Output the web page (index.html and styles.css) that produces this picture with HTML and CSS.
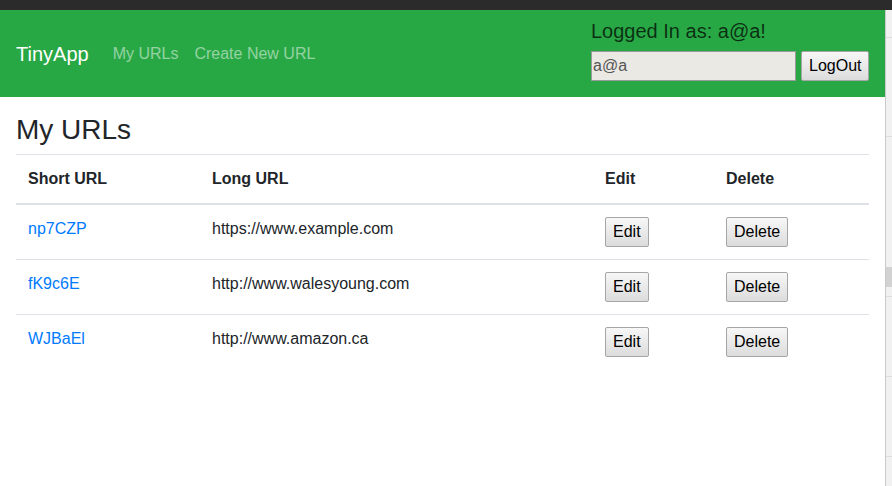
FILE: index.html
```html
<!DOCTYPE html>
<html>
<head>
<meta charset="utf-8">
<title>TinyApp</title>
<link rel="stylesheet" href="styles.css">
</head>
<body>
<div class="topbar"></div>
<div class="frame">
  <div class="page">
    <nav class="navbar">
      <div class="nav-left">
        <a class="brand" href="#">TinyApp</a>
        <a class="nav-link" href="#">My URLs</a>
        <a class="nav-link" href="#">Create New URL</a>
      </div>
      <form class="login">
        <div class="login-text">Logged In as: a@a!</div>
        <div class="login-row">
          <input class="login-input" type="text" value="a@a">
          <button class="btn" type="button">LogOut</button>
        </div>
      </form>
    </nav>
    <main class="container">
      <h3 class="title">My URLs</h3>
      <table class="table">
        <colgroup>
          <col class="c1"><col class="c2"><col class="c3"><col class="c4">
        </colgroup>
        <thead>
          <tr><th>Short URL</th><th>Long URL</th><th>Edit</th><th>Delete</th></tr>
        </thead>
        <tbody>
          <tr>
            <td><a class="link" href="#">np7CZP</a></td>
            <td>https://www.example.com</td>
            <td><button class="btn" type="button">Edit</button></td>
            <td><button class="btn" type="button">Delete</button></td>
          </tr>
          <tr>
            <td><a class="link" href="#">fK9c6E</a></td>
            <td>http://www.walesyoung.com</td>
            <td><button class="btn" type="button">Edit</button></td>
            <td><button class="btn" type="button">Delete</button></td>
          </tr>
          <tr>
            <td><a class="link" href="#">WJBaEl</a></td>
            <td>http://www.amazon.ca</td>
            <td><button class="btn" type="button">Edit</button></td>
            <td><button class="btn" type="button">Delete</button></td>
          </tr>
        </tbody>
      </table>
    </main>
  </div>
  <aside class="strip">
    <div class="seg s1"></div>
    <div class="seg s2"></div>
    <div class="seg s3"></div>
    <div class="seg thumb"></div>
    <div class="seg s4"></div>
    <div class="seg s5"></div>
    <div class="seg s6"></div>
    <div class="seg s7"></div>
  </aside>
</div>
</body>
</html>
```
FILE: styles.css
```css
* { box-sizing: border-box; }
html, body { margin: 0; padding: 0; height: 100%; overflow: hidden; }
body {
  font-family: "Liberation Sans", Arial, sans-serif;
  font-size: 16px;
  line-height: 1.5;
  color: #212529;
  background: #fff;
}
.topbar { height: 10px; background: #2b2b2b; }
.frame { display: flex; height: 476px; }
.page { width: 885px; flex: none; }
.navbar {
  background: #28a745;
  height: 87px;
  padding: 0 16px;
  display: flex;
  align-items: center;
  justify-content: space-between;
}
.nav-left { display: flex; align-items: center; }
.brand {
  color: #fff;
  font-size: 20px;
  line-height: 30px;
  text-decoration: none;
  margin-right: 16px;
}
.nav-link {
  color: rgba(255,255,255,0.5);
  text-decoration: none;
  padding: 0 8px;
  line-height: 24px;
}
.login { margin: 0; padding-top: 8px; padding-bottom: 8px; align-self: flex-start; width: 278px; }
.login-text {
  font-size: 20px;
  line-height: 26px;
  color: rgba(0,0,0,0.72);
  margin-bottom: 7px;
}
.login-row { display: flex; gap: 5px; }
.login-input {
  width: 205px;
  height: 30px;
  border: 1px solid #9a9a9a;
  background: #ebe9e3;
  color: #555;
  font-family: "Liberation Sans", Arial, sans-serif;
  font-size: 16px;
  padding: 0 1px;
  margin: 0;
  outline: none;
}
.btn {
  height: 30px;
  font-family: "Liberation Sans", Arial, sans-serif;
  font-size: 16px;
  line-height: 20px;
  color: #000;
  padding: 0 7px;
  margin: 0;
  border: 1px solid #a6a6a6;
  border-radius: 2px;
  background: linear-gradient(#f7f7f7, #dcdcdc);
}
.container { padding: 0 16px; }
.title {
  font-size: 28px;
  font-weight: 500;
  line-height: 33px;
  margin: 16px 0 8px;
}
.table {
  width: 853px;
  border-collapse: collapse;
  table-layout: fixed;
}
.c1 { width: 184px; }
.c2 { width: 393px; }
.c3 { width: 121px; }
.c4 { width: 155px; }
.table th, .table td {
  padding: 12px;
  text-align: left;
  vertical-align: top;
  border-top: 1px solid #dee2e6;
}
.table th { font-weight: bold; border-bottom: 2px solid #dee2e6; }
.link { color: #007bff; text-decoration: none; }
.strip {
  flex: 1;
  border-left: 1px solid #c9c9c9;
  background: #f1f1f1;
  display: flex;
  flex-direction: column;
}
.seg { flex: none; border-bottom: 1px solid #dcdcdc; }
.s1 { height: 28px; }
.s2 { height: 99px; }
.s3 { height: 130px; border-bottom: none; }
.thumb { height: 20px; background: #d2d2d2; border-bottom: none; }
.s4 { height: 10px; }
.s5 { height: 80px; }
.s6 { height: 80px; }
.s7 { height: 20px; border-bottom: none; }
```
